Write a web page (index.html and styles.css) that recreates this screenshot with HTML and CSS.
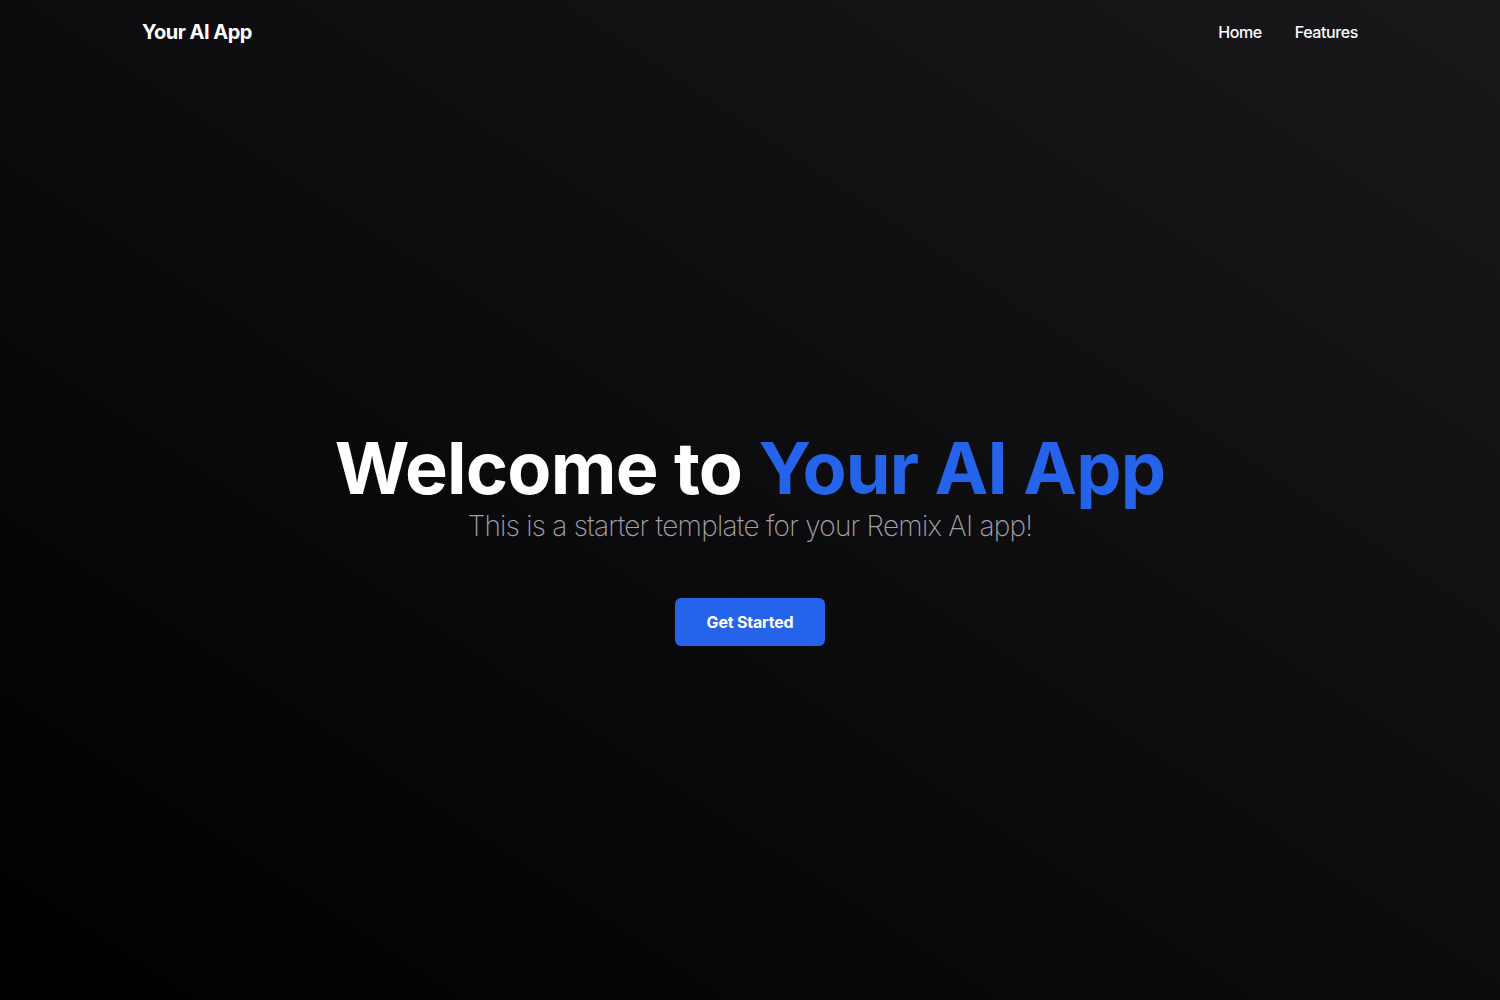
FILE: index.html
```html
<!DOCTYPE html>
<html lang="en">
<head>
<meta charset="utf-8">
<title>Your AI App</title>
<link rel="stylesheet" href="styles.css">
</head>
<body>
<div class="page">
  <header class="header">
    <div class="brand">Your AI App</div>
    <nav class="nav">
      <a href="#">Home</a>
      <a href="#">Features</a>
    </nav>
  </header>
  <main class="hero">
    <h1 class="title">Welcome to <span class="accent">Your AI App</span></h1>
    <p class="subtitle">This is a starter template for your Remix AI app!</p>
    <a class="cta" href="#">Get Started</a>
  </main>
</div>
</body>
</html>
```
FILE: styles.css
```css
* { box-sizing: border-box; }
html, body { margin: 0; padding: 0; }
body {
  font-family: Inter, "Liberation Sans", sans-serif;
  color: #fff;
  background: linear-gradient(to top right, #000000 0%, #0c0c0e 50%, #18181b 100%);
  min-height: 100vh;
}
.page {
  display: flex;
  flex-direction: column;
  min-height: 100vh;
}
.header {
  width: 100%;
  max-width: 1280px;
  margin: 0 auto;
  padding: 18px 32px;
  display: flex;
  justify-content: space-between;
  align-items: center;
}
.brand {
  font-size: 20px;
  line-height: 28px;
  font-weight: 700;
  letter-spacing: -0.5px;
}
.nav {
  display: flex;
  gap: 33px;
}
.nav a {
  color: #fff;
  text-decoration: none;
  font-size: 16px;
  line-height: 24px;
  font-weight: 500;
  letter-spacing: -0.4px;
}
.hero {
  flex: 1;
  display: flex;
  flex-direction: column;
  align-items: center;
  justify-content: center;
  text-align: center;
  padding-top: 14px;
}
.title {
  margin: 0;
  font-size: 72px;
  line-height: 1;
  font-weight: 700;
  letter-spacing: -0.8px;
}
.accent { color: #2563eb; }
.subtitle {
  margin: 0;
  margin-top: 4px;
  font-size: 28px;
  line-height: 36px;
  font-weight: 200;
  color: #a1a1aa;
  letter-spacing: -0.75px;
}
.cta {
  margin-top: 54px;
  background: #2563eb;
  color: #fff;
  text-decoration: none;
  font-size: 16px;
  font-weight: 700;
  line-height: 24px;
  padding: 12px 32px;
  border-radius: 6px;
  letter-spacing: -0.2px;
}
```
